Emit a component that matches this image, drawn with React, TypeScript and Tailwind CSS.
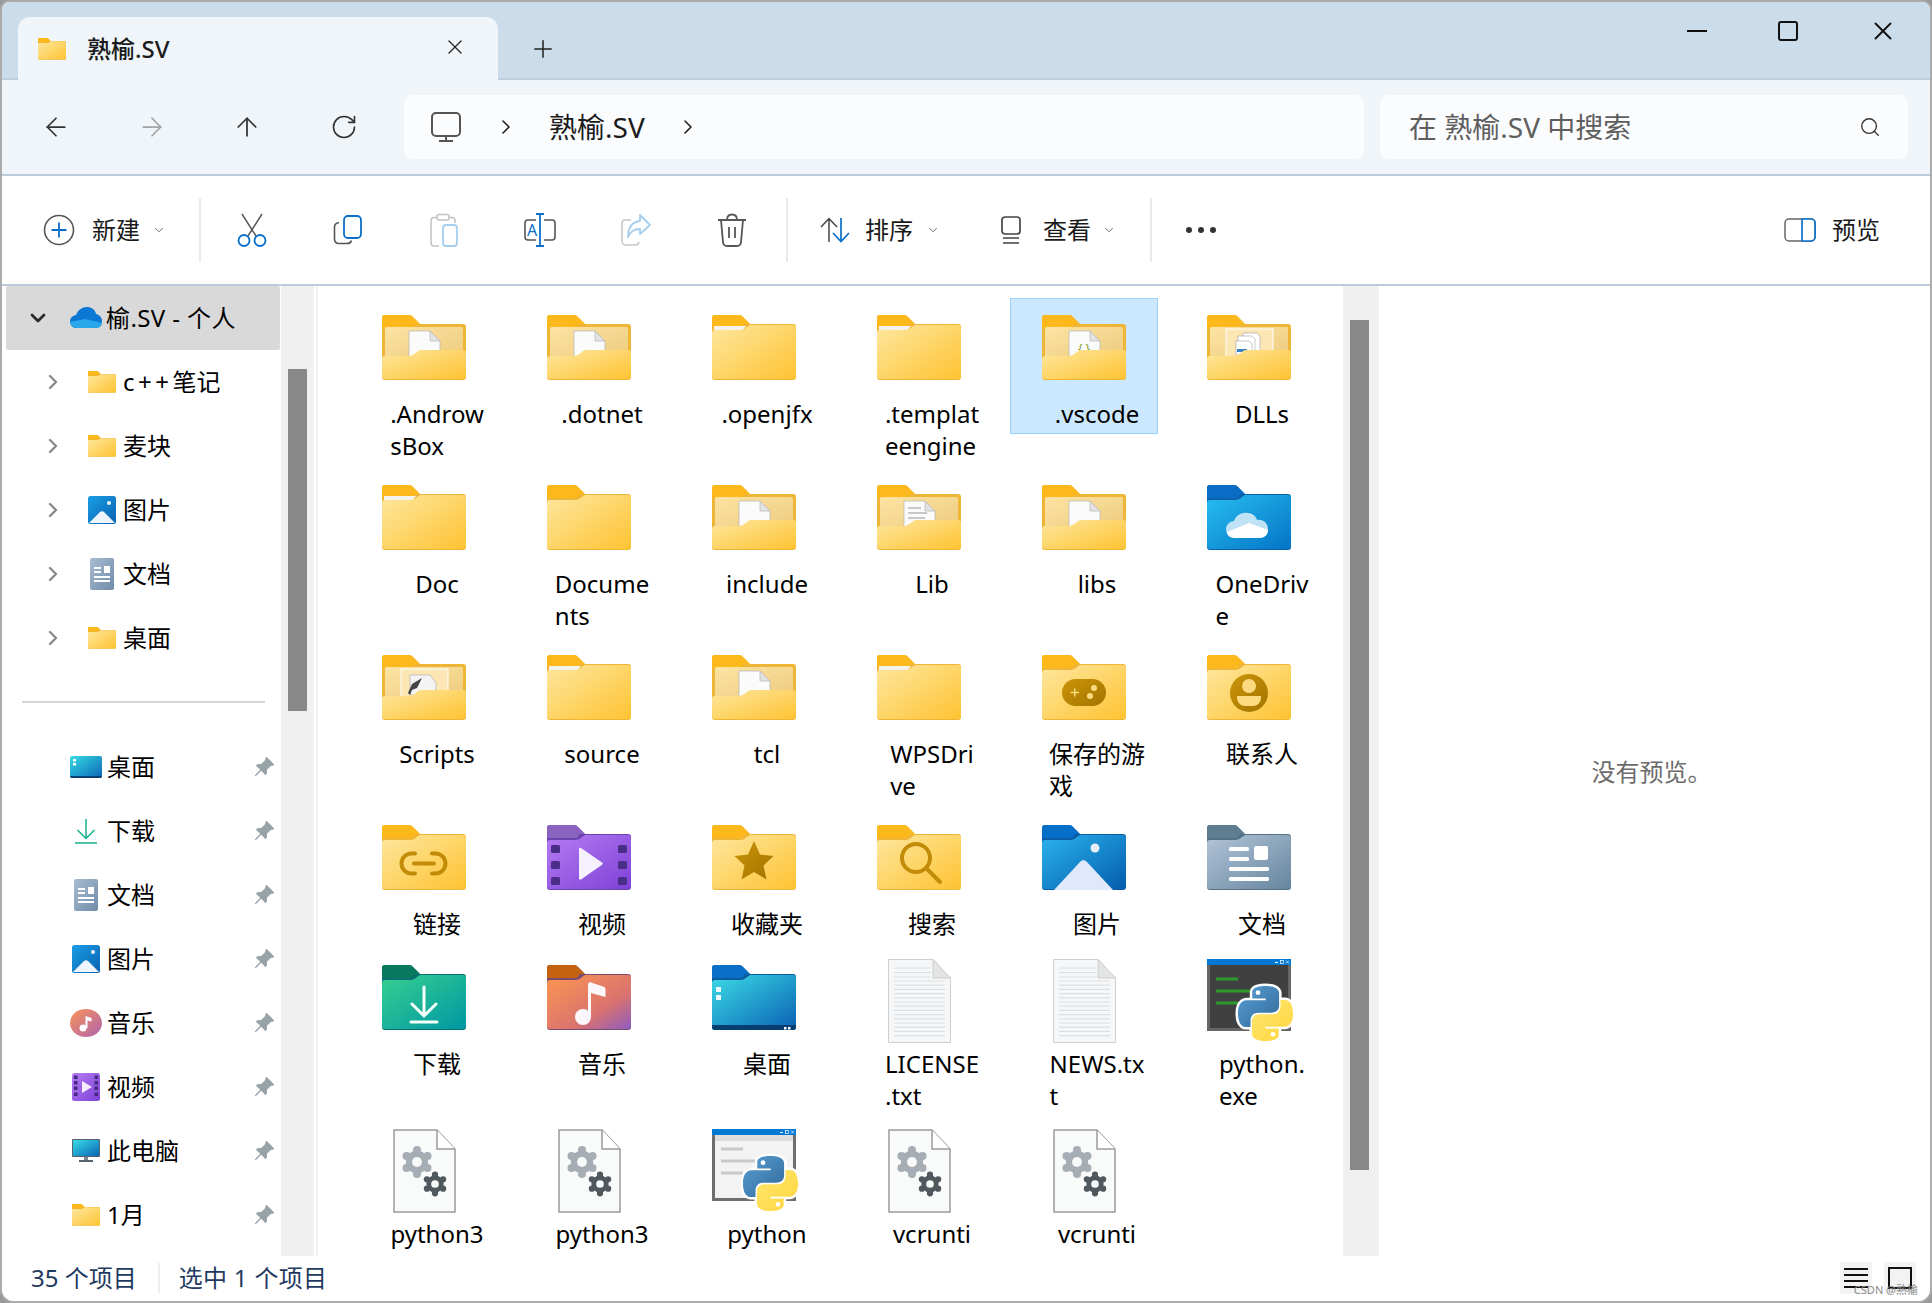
import { ArrowLeft, ArrowRight, ArrowUp, ChevronDown, ChevronRight, Plus, RotateCw, Search, X } from "lucide-react";
import { BsPinAngleFill } from "react-icons/bs";
import type { ReactNode } from "react";

type Theme = { tab: string; back: string; front: string };

const yellow: Theme = { tab: "#fdb91b", back: "#efb536", front: "url(#gYellow)" };
const themes: Record<string, Theme> = {
  yellow,
  onedrive: { tab: "#0a6cc4", back: "#0b62a8", front: "url(#gOne)" },
  green: { tab: "#07795c", back: "#0b6f72", front: "url(#gGreen)" },
  music: { tab: "#c5620f", back: "#7a4a70", front: "url(#gMusic)" },
  desktop: { tab: "#0a6fc8", back: "#0a5a9e", front: "url(#gDesk)" },
  pics: { tab: "#0670c8", back: "#0a5ca6", front: "url(#gPics)" },
  docs: { tab: "#5f7d90", back: "#567086", front: "url(#gDocs)" },
  video: { tab: "#8a62c0", back: "#6a43b0", front: "url(#gVideo)" },
};

const CLOSED_FRONT = "M0 18a3 3 0 0 1 3-3H28c3 0 5-1 7-3l3-2H81a3 3 0 0 1 3 3V61a3 3 0 0 1-3 3H3a3 3 0 0 1-3-3Z";
const OPEN_FRONT = "M0 44a3 3 0 0 1 3-3H26c3 0 5-1 7-2.500l2-1.500c1-1 2-2 4-2H81a3 3 0 0 1 3 3V61a3 3 0 0 1-3 3H3a3 3 0 0 1-3-3Z";

const Gradients = () => (
  <svg className="absolute w-0 h-0">
    <defs>
      {[
        ["gYellow", "#fee79f", "#fec332"],
        ["gOne", "#27bdf0", "#0474c6"],
        ["gGreen", "#36d08f", "#0097a3"],
        ["gDesk", "#3bdae6", "#0a62b4"],
        ["gPics", "#2bb3ec", "#035cad"],
        ["gDocs", "#b2c4d8", "#66869f"],
        ["gVideo", "#b57bf3", "#7d42d6"],
        ["gInner", "#fde4a3", "#eccb7e"],
        ["gTile", "#1b9ee6", "#0a62b0"],
        ["gSlate", "#a9bcd2", "#6f8ca8"],
        ["gMonitor", "#37dbe6", "#0b66b6"],
      ].map(([id, a, b]) => (
        <linearGradient key={id} id={id} x1="0" y1="0" x2="1" y2="1">
          <stop offset="0" stopColor={a} />
          <stop offset="1" stopColor={b} />
        </linearGradient>
      ))}
      <linearGradient id="gMusic" x1="0" y1="0" x2="1" y2="1">
        <stop offset="0" stopColor="#fd9650" />
        <stop offset="0.65" stopColor="#d9736f" />
        <stop offset="1" stopColor="#8e5cc0" />
      </linearGradient>
      <linearGradient id="gDark" x1="0" y1="0" x2="1" y2="1">
        <stop offset="0" stopColor="#cc9408" />
        <stop offset="1" stopColor="#a27500" />
      </linearGradient>
      <linearGradient id="gPyBlue" x1="0" y1="0" x2="1" y2="1">
        <stop offset="0" stopColor="#5a9fd4" />
        <stop offset="1" stopColor="#306998" />
      </linearGradient>
      <linearGradient id="gPyYellow" x1="0" y1="0" x2="1" y2="1">
        <stop offset="0" stopColor="#ffd43b" />
        <stop offset="1" stopColor="#ffe873" />
      </linearGradient>
    </defs>
  </svg>
);

const Paper = ({ kind }: { kind: string }) => {
  if (kind === "dll" || kind === "script") {
    return (
      <g>
        <rect x="19" y="14" width="47" height="30" fill="#fbe6b4" stroke="#fff" />
        {kind === "dll" ? (
          <g fill="#fff" stroke="#9aa3aa" strokeWidth="0.6">
            <path d="M36 30V18h14l3 3v16H36Z" />
            <path d="M31 33V21h14l3 3v16H31Z" />
            <path d="M29 40V26h13l3 3v11Z" />
            <rect x="30" y="34" width="10" height="3" fill="#3b82c4" stroke="none" />
          </g>
        ) : (
          <g>
            <path d="M28 20H48l6 8v12H28Z" fill="#f4f4f4" stroke="#aaa" strokeWidth="0.6" />
            <path d="M26 38l4-9 10-6-5 10-5 2-2 5Z" fill="#444" />
            <circle cx="51" cy="40" r="5" fill="#2f78b8" />
          </g>
        )}
      </g>
    );
  }
  return (
    <g>
      <path d="M27 42V16H48L58 26V42Z" fill="#fbfbfb" stroke="#b5b5b5" strokeWidth="0.7" />
      <path d="M48 16V26H58Z" fill="#e3e3e3" stroke="#b5b5b5" strokeWidth="0.7" />
      {kind === "code" && (
        <text x="42" y="38" textAnchor="middle" fontSize="12" fill="#8aa030">{"{ }"}</text>
      )}
      {kind === "lib" && (
        <g>
          <path d="M31 23H44M31 28H50M31 33H48" stroke="#b8b8b8" strokeWidth="1.400" />
          <rect x="44" y="35" width="14" height="8" rx="3" fill="#2f78b8" />
        </g>
      )}
    </g>
  );
};

const overlays: Record<string, ReactNode> = {
  link: (
    <g fill="none" stroke="#c28c08" strokeWidth="4" strokeLinecap="round">
      <path d="M33 28.500H29.500a10 10 0 0 0 0 20H33" />
      <path d="M50 28.500H53.500a10 10 0 0 1 0 20H50" />
      <path d="M32 38.500H52" />
    </g>
  ),
  video: (
    <g>
      {[20, 36, 52].map((y) => (
        <g key={y} fill="#4a2d86">
          <rect x="4" y={y} width="9" height="8" rx="1.500" />
          <rect x="71" y={y} width="9" height="8" rx="1.500" />
        </g>
      ))}
      <path d="M32 24.500C32 23 33 22.500 34 23L55 37.500c1 .7 1 1.500 0 2.200L34 54.500c-1 .6-2 0-2-1.500Z" fill="#f6f0ff" />
    </g>
  ),
  star: <path d="M42 16l6 13.500 13.500 1.500-10 9.500 3 14L42 47l-12.500 7.500 3-14-10-9.500 13.500-1.500Z" fill="url(#gDark)" />,
  game: (
    <g>
      <rect x="20" y="24" width="44" height="27" rx="13.500" fill="url(#gDark)" />
      <path d="M28.500 37.500H37M32.700 33.500V41.500" stroke="#fbd97e" strokeWidth="1.500" />
      <circle cx="52" cy="33" r="3" fill="#fbd97e" />
      <circle cx="48" cy="41" r="3" fill="#fbd97e" />
    </g>
  ),
  contact: (
    <g>
      <circle cx="42" cy="38" r="19" fill="url(#gDark)" />
      <circle cx="42" cy="31" r="7" fill="#fdd97f" />
      <path d="M30 41H54V43a8 8 0 0 1-8 8H38a8 8 0 0 1-8-8Z" fill="#fdd97f" />
    </g>
  ),
  search: (
    <g fill="none" stroke="#c28c08" strokeWidth="4" strokeLinecap="round">
      <circle cx="39" cy="33" r="14" />
      <path d="M50 44L63 57" />
    </g>
  ),
  pics: (
    <g>
      <circle cx="53" cy="23" r="4.500" fill="#e5eef8" />
      <path d="M12 65L38 37c2-2.500 5-2.500 7 0L71 65Z" fill="#dfe9fb" />
    </g>
  ),
  docs: (
    <g fill="#fff">
      <rect x="22" y="22" width="20" height="4" rx="1.500" />
      <rect x="22" y="32" width="20" height="4" rx="1.500" />
      <rect x="47" y="21" width="14" height="14" rx="2" />
      <rect x="22" y="42" width="40" height="4" rx="1.500" />
      <rect x="22" y="52" width="40" height="4" rx="1.500" />
    </g>
  ),
  download: (
    <g fill="none" stroke="#f4fffb" strokeWidth="3" strokeLinecap="round" strokeLinejoin="round">
      <path d="M42 22V50M30 39L42 51L54 39" />
      <path d="M29 57H55" />
    </g>
  ),
  music: (
    <g fill="#fbf7fa">
      <circle cx="36" cy="52" r="8" />
      <path d="M41 52V20c0-2 1-3 3-2.500l12 4c2 .7 2.500 1.500 2.500 3V32L44 28V52Z" />
    </g>
  ),
  desktop: (
    <g>
      <path d="M0 60H84V62a3 3 0 0 1-3 3H3a3 3 0 0 1-3-3Z" fill="#063e72" />
      <rect x="4" y="22" width="5" height="5" fill="#eaf7fb" />
      <rect x="4" y="30" width="5" height="5" fill="#eaf7fb" />
      <rect x="72" y="62" width="2.500" height="2.500" fill="#fff" />
      <rect x="76" y="62" width="2.500" height="2.500" fill="#fff" />
    </g>
  ),
  onedrive: (
    <g>
      <path d="M28 53a8.500 8.500 0 0 1-1-17c2-6 8-9 14-8 4 0 8 3 9 7 6-1 11 3 11 9s-4 9-9 9Z" fill="#bfe3f4" />
      <path d="M28 53c-5 0-8-3-8-6l22-9 19 7c0 5-4 8-9 8Z" fill="#fff" />
    </g>
  ),
};

const FolderIcon = ({ theme = "yellow", paper, strip, overlay, width = 84 }: { theme?: string; paper?: string; strip?: boolean; overlay?: string; width?: number }) => {
  const t = themes[theme];
  return (
    <svg width={width} height={(width * 66) / 84} viewBox="0 0 84 66">
      <path d="M3 0H27a5 5 0 0 1 4 2L38 9H81a3 3 0 0 1 3 3V62a3 3 0 0 1-3 3H3a3 3 0 0 1-3-3V3a3 3 0 0 1 3-3Z" fill={t.back} />
      <path d="M3 0H27a5 5 0 0 1 4 2L38 9H33L30 13H0V3a3 3 0 0 1 3-3Z" fill={t.tab} />
      {paper ? (
        <g>
          <rect x="3" y="12" width="78" height="32" rx="1.500" fill="url(#gInner)" />
          <Paper kind={paper} />
          <path d={OPEN_FRONT} fill={t.front} />
        </g>
      ) : (
        <g>
          {strip && <path d="M2 11H34L31 15H2Z" fill="#f4f2ea" />}
          <path d={CLOSED_FRONT} fill={t.front} />
        </g>
      )}
      {overlay && overlays[overlay]}
    </svg>
  );
};

const TxtIcon = () => (
  <svg width="63" height="84" viewBox="0 0 63 84" className="mt-[6px]">
    <path d="M.5.500H45L62.500 19V83.500H.5Z" fill="#f6f7f8" stroke="#cfcfcf" />
    {Array.from({ length: 14 }, (_, i) => (
      <path key={i} d={`M6 ${22 + i * 4.2}H57`} stroke="#dcdfe2" strokeWidth="1.200" />
    ))}
    {[9, 13.5, 18].map((y) => (
      <path key={y} d={`M6 ${y}H43`} stroke="#dcdfe2" strokeWidth="1.200" />
    ))}
    <path d="M45 .5V19H62.500Z" fill="#e2e4e6" stroke="#cfcfcf" />
  </svg>
);

const Gear = ({ x, y, r, color }: { x: number; y: number; r: number; color: string }) => (
  <g fill={color}>
    <circle cx={x} cy={y} r={r * 0.72} />
    {[0, 60, 120, 180, 240, 300].map((a) => (
      <circle key={a} cx={x + r * 0.78 * Math.sin((a * Math.PI) / 180)} cy={y - r * 0.78 * Math.cos((a * Math.PI) / 180)} r={r * 0.26} />
    ))}
    <circle cx={x} cy={y} r={r * 0.32} fill="#f8f9f9" />
  </g>
);

const GearFile = () => (
  <svg width="63" height="84" viewBox="0 0 63 84" className="mt-[6px]">
    <path d="M1 1H44L62 20V83H1Z" fill="#f9fafa" stroke="#9a9a9a" strokeWidth="1.500" />
    <path d="M44 1V20H62" fill="#fff" stroke="#9a9a9a" strokeWidth="1.500" />
    <Gear x={24} y={33} r={15.5} color="#a6adb4" />
    <Gear x={42} y={55} r={12} color="#50585e" />
  </svg>
);

const PyLogo = ({ x, y, size }: { x: number; y: number; size: number }) => {
  const d = "M54.900 0C26.900 0 28.600 12.200 28.600 12.200V24.800H55.300V28.600H18C18 28.600 0 26.600 0 54.900S15.700 82.200 15.700 82.200H25.100V69.100S24.600 53.400 40.600 53.400H67.200S82.200 53.200 82.200 38.900V15.200S84.500 0 54.900 0ZM40 8.500A4.800 4.800 0 1 1 40 18.100 4.800 4.800 0 0 1 40 8.500Z";
  return (
    <svg x={x} y={y} width={size} height={size} viewBox="-6 -6 122 122">
      <path d={d} fill="#fff" stroke="#fff" strokeWidth="10" strokeLinejoin="round" />
      <path d={d} transform="rotate(180 55 55)" fill="#fff" stroke="#fff" strokeWidth="10" strokeLinejoin="round" />
      <path d={d} fill="url(#gPyBlue)" fillRule="evenodd" />
      <path d={d} transform="rotate(180 55 55)" fill="url(#gPyYellow)" fillRule="evenodd" />
    </svg>
  );
};

const PyWindow = ({ dark }: { dark?: boolean }) => (
  <svg width="84" height="84" viewBox="0 0 84 84" className="overflow-visible mt-[6px]">
    <rect y="0" width="84" height="72" fill={dark ? "#666" : "#6e6e6e"} />
    <rect x="3" y="6" width="78" height="63" fill={dark ? "#404040" : "#f3f3f3"} />
    {!dark && <rect x="3" y="6" width="78" height="6" fill="#dcdcdc" />}
    <rect width="84" height="6" fill="#0078d4" />
    <rect x="68" y="3" width="3" height="1" fill="#fff" />
    <rect x="73.500" y="1.500" width="3" height="3" fill="none" stroke="#fff" strokeWidth="0.700" />
    <path d="M79 1.500L82 4.500M82 1.500L79 4.500" stroke="#fff" strokeWidth="0.700" />
    {[20, 32, 44].map((y, i) => (
      <rect key={y} x={9} y={y - 1.5} width={i === 1 ? 34 : 22} height="3" fill={dark ? "#2e9a2e" : "#c9c9c9"} />
    ))}
    <PyLogo x={28} y={24} size={61} />
  </svg>
);

const Tile = () => (
  <svg width="28" height="28" viewBox="0 0 28 28">
    <rect width="28" height="28" rx="2.500" fill="url(#gTile)" />
    <circle cx="21" cy="7" r="2" fill="#eaf4fb" />
    <path d="M1 27L12 16c1-1 3-1 4 0L27 27Z" fill="#eef5fd" />
  </svg>
);

const DocTile = () => (
  <svg width="24" height="32" viewBox="0 0 24 32">
    <rect width="24" height="32" rx="2" fill="url(#gSlate)" />
    <path d="M4 10H11M4 14H11M4 19H20M4 23H20" stroke="#fff" strokeWidth="1.800" />
    <rect x="14" y="8" width="6" height="7" fill="#fff" />
  </svg>
);

const navIcons: Record<string, ReactNode> = {
  desktop: (
    <svg width="32" height="22" viewBox="0 0 32 22">
      <rect width="32" height="22" rx="2" fill="url(#gMonitor)" />
      <path d="M0 20H32V20a2 2 0 0 1-2 2H2a2 2 0 0 1-2-2Z" fill="#064070" />
      <rect x="3" y="3" width="3" height="2.500" fill="#fff" />
      <rect x="3" y="7" width="3" height="2.500" fill="#fff" />
    </svg>
  ),
  download: (
    <svg width="24" height="26" viewBox="0 0 24 26" fill="none" stroke="#17b08f" strokeWidth="1.500">
      <path d="M12 1V20M3.500 12L12 20.500L20.500 12M1 25H23" />
    </svg>
  ),
  doc: <DocTile />,
  pic: <Tile />,
  music: (
    <svg width="32" height="28" viewBox="0 0 32 28">
      <defs>
        <linearGradient id="gNavMusic" x1="0" y1="0" x2="1" y2="1">
          <stop offset="0" stopColor="#f99255" />
          <stop offset="1" stopColor="#b064b0" />
        </linearGradient>
      </defs>
      <ellipse cx="16" cy="14" rx="16" ry="14" fill="url(#gNavMusic)" />
      <circle cx="13" cy="19" r="3.500" fill="#fff" />
      <path d="M15.500 19V7l6 2v3.500l-4-1V19Z" fill="#fff" />
    </svg>
  ),
  video: (
    <svg width="28" height="28" viewBox="0 0 28 28">
      <rect width="28" height="28" rx="2.500" fill="url(#gVideo)" />
      {[2.5, 8, 13.5, 19.5].map((y) => (
        <g key={y} fill="#432a80">
          <rect x="2" y={y} width="3.500" height="3.500" />
          <rect x="22.500" y={y} width="3.500" height="3.500" />
        </g>
      ))}
      <path d="M10 8L20 14L10 20Z" fill="#f4eeff" />
    </svg>
  ),
  pc: (
    <svg width="28" height="24" viewBox="0 0 28 24">
      <rect width="28" height="18" rx="1" fill="#58626b" />
      <rect x="1" y="1" width="26" height="16" fill="url(#gMonitor)" />
      <rect x="12" y="18" width="4" height="3" fill="#7b868f" />
      <rect x="7" y="21" width="14" height="2" fill="#58626b" />
    </svg>
  ),
  folder: <FolderIcon width={28} />,
};

const upperNav: { name: ReactNode; icon: string }[] = [
  { name: <><span className="tracking-[3.5px]">c++</span>笔记</>, icon: "folder" },
  { name: "麦块", icon: "folder" },
  { name: "图片", icon: "pic" },
  { name: "文档", icon: "doc" },
  { name: "桌面", icon: "folder" },
];

const lowerNav = [
  { name: "桌面", icon: "desktop" },
  { name: "下载", icon: "download" },
  { name: "文档", icon: "doc" },
  { name: "图片", icon: "pic" },
  { name: "音乐", icon: "music" },
  { name: "视频", icon: "video" },
  { name: "此电脑", icon: "pc" },
  { name: "1月", icon: "folder" },
];

const Sidebar = () => (
  <div className="w-[279px] shrink-0 overflow-hidden">
    <div className="flex items-center h-[64px] ml-[4px] w-[274px] bg-[#d9d9d9] rounded-[2px]">
      <ChevronDown size={24} strokeWidth={2.8} color="#2b2b2b" className="ml-[20px]" />
      <svg width="32" height="22" viewBox="0 0 32 22" className="ml-[20px]">
        <path d="M7 21a6.500 6.500 0 0 1-1-13C8 3 12 0 17 0c4 0 8 2 9 7 3 .5 6 3 6 7 0 4-3 7-6 7Z" fill="#0a78d4" />
        <path d="M7 21c-4 0-7-3-7-6l15-3 17 4c0 3-3 5-6 5Z" fill="#28a8ea" />
      </svg>
      <span className="ml-[4px] text-[24px] tracking-[0.4px]">榆.SV - 个人</span>
    </div>
    {upperNav.map((n, i) => (
      <div key={i} className="flex items-center h-[64px]">
        <ChevronRight size={24} strokeWidth={2.4} color="#8a8a8a" className="ml-[39px] shrink-0" />
        <div className="w-[28px] ml-[23px] flex justify-center shrink-0">{navIcons[n.icon]}</div>
        <span className="ml-[7px] text-[24px]">{n.name}</span>
      </div>
    ))}
    <div className="h-[2px] bg-[#d4d4d4] ml-[20px] w-[243px] mt-[31px] mb-[32px]" />
    {lowerNav.map((n) => (
      <div key={n.name} className="flex items-center h-[64px]">
        <div className="w-[32px] ml-[68px] flex justify-center shrink-0">{navIcons[n.icon]}</div>
        <span className="ml-[5px] text-[24px]">{n.name}</span>
        <BsPinAngleFill size={22} color="#98a2a9" className="ml-auto mr-[6px]" />
      </div>
    ))}
  </div>
);

type Item = { lines: string[]; icon: ReactNode; selected?: boolean };

const folder = (lines: string[], paper?: string, selected?: boolean): Item => ({ lines, icon: <FolderIcon paper={paper} />, selected });
const strip = (lines: string[]): Item => ({ lines, icon: <FolderIcon strip /> });
const special = (lines: string[], theme: string, overlay: string): Item => ({ lines, icon: <FolderIcon theme={theme} overlay={overlay} /> });

const items: Item[] = [
  folder([".Androw", "sBox"], "plain"),
  folder([".dotnet"], "plain"),
  strip([".openjfx"]),
  strip([".templat", "eengine"]),
  folder([".vscode"], "code", true),
  folder(["DLLs"], "dll"),
  strip(["Doc"]),
  folder(["Docume", "nts"]),
  folder(["include"], "plain"),
  folder(["Lib"], "lib"),
  folder(["libs"], "plain"),
  special(["OneDriv", "e"], "onedrive", "onedrive"),
  folder(["Scripts"], "script"),
  strip(["source"]),
  folder(["tcl"], "plain"),
  strip(["WPSDri", "ve"]),
  special(["保存的游", "戏"], "yellow", "game"),
  special(["联系人"], "yellow", "contact"),
  special(["链接"], "yellow", "link"),
  special(["视频"], "video", "video"),
  special(["收藏夹"], "yellow", "star"),
  special(["搜索"], "yellow", "search"),
  special(["图片"], "pics", "pics"),
  special(["文档"], "docs", "docs"),
  special(["下载"], "green", "download"),
  special(["音乐"], "music", "music"),
  special(["桌面"], "desktop", "desktop"),
  { lines: ["LICENSE", ".txt"], icon: <TxtIcon /> },
  { lines: ["NEWS.tx", "t"], icon: <TxtIcon /> },
  { lines: ["python.", "exe"], icon: <PyWindow dark /> },
  { lines: ["python3", ".dll"], icon: <GearFile /> },
  { lines: ["python3", "12.dll"], icon: <GearFile /> },
  { lines: ["python"], icon: <PyWindow /> },
  { lines: ["vcrunti", "me140"], icon: <GearFile /> },
  { lines: ["vcrunti", "me140"], icon: <GearFile /> },
];

const Cell = ({ item }: { item: Item }) => (
  <div className={`pt-[8px] pb-[4px] ${item.selected ? "bg-[#cce8ff] outline outline-1 -outline-offset-1 outline-[#99d1ff]" : "min-h-[138px]"}`}>
    <div className="h-[84px] flex items-center justify-center">{item.icon}</div>
    <div className="mt-[8px] pl-[26px] text-[24px] leading-[32px] text-black">
      <div className="w-fit mx-auto whitespace-nowrap">
        {item.lines.map((l) => (
          <div key={l}>{l}</div>
        ))}
      </div>
    </div>
  </div>
);

const ToolIcon = ({ children }: { children: ReactNode }) => (
  <div className="w-[96px] h-[40px] flex items-center justify-center shrink-0">{children}</div>
);

const Divider = () => <div className="w-[2px] h-[64px] bg-[#e9e9e9] shrink-0" />;

const Toolbar = () => (
  <div className="h-[108px] shrink-0 bg-white flex items-center text-[24px] text-[#1a1a1a]">
    <svg width="32" height="32" viewBox="0 0 32 32" fill="none" className="ml-[41px]">
      <circle cx="16" cy="16" r="14.500" stroke="#555" strokeWidth="1.600" />
      <path d="M16 8.500V23.500M8.500 16H23.500" stroke="#0a6fc9" strokeWidth="1.800" />
    </svg>
    <span className="ml-[17px] w-[48px]">新建</span>
    <ChevronDown size={14} strokeWidth={1.5} color="#555" className="ml-[12px]" />
    <div className="ml-[33px]"><Divider /></div>
    <div className="ml-[3px] flex">
      <ToolIcon>
        <svg width="30" height="34" viewBox="0 0 30 34" fill="none">
          <path d="M5 1L19 23M25 1L11 23" stroke="#555" strokeWidth="1.400" />
          <circle cx="7" cy="27.500" r="5.500" stroke="#0a6fc9" strokeWidth="1.800" />
          <circle cx="23" cy="27.500" r="5.500" stroke="#0a6fc9" strokeWidth="1.800" />
        </svg>
      </ToolIcon>
      <ToolIcon>
        <svg width="30" height="30" viewBox="0 0 30 30" fill="none">
          <path d="M6 7.500C3 8 1.500 10 1.500 12V24c0 3 2 4.500 4.500 4.500H14c2 0 4-1 4.500-3" stroke="#555" strokeWidth="1.600" />
          <rect x="11" y="1" width="17" height="22" rx="4" fill="#fff" stroke="#0a6fc9" strokeWidth="1.800" />
        </svg>
      </ToolIcon>
      <ToolIcon>
        <svg width="30" height="34" viewBox="0 0 30 34" fill="none">
          <path d="M8 4.500H5a3 3 0 0 0-3 3V30a3 3 0 0 0 3 3H10M20 4.500H23a3 3 0 0 1 3 3V10" stroke="#c4c4c4" strokeWidth="1.600" />
          <rect x="8" y="1.500" width="12" height="5.500" rx="2" stroke="#c4c4c4" strokeWidth="1.600" />
          <rect x="14" y="12" width="14" height="21" rx="3" stroke="#a6cfee" strokeWidth="1.800" />
        </svg>
      </ToolIcon>
      <ToolIcon>
        <svg width="32" height="34" viewBox="0 0 32 34" fill="none">
          <path d="M12 7H4a3 3 0 0 0-3 3V24a3 3 0 0 0 3 3H12M20 7H28a3 3 0 0 1 3 3V24a3 3 0 0 1-3 3H20" stroke="#555" strokeWidth="1.600" />
          <path d="M16 1V33M12 1H20M12 33H20" stroke="#0a6fc9" strokeWidth="1.800" />
          <text x="8" y="23" textAnchor="middle" fontSize="16" fill="#0a6fc9">A</text>
        </svg>
      </ToolIcon>
      <ToolIcon>
        <svg width="30" height="32" viewBox="0 0 30 32" fill="none">
          <path d="M10 6H4a3 3 0 0 0-3 3V27a4 4 0 0 0 4 4H15a4 4 0 0 0 3-3" stroke="#c8c8c8" strokeWidth="1.600" />
          <path d="M19 1L29 11L19 20V15C13 15 10 17 7 23 7 14 11 8 19 7Z" fill="#fff" stroke="#a6cfee" strokeWidth="1.800" strokeLinejoin="round" />
        </svg>
      </ToolIcon>
      <ToolIcon>
        <svg width="30" height="34" viewBox="0 0 30 34" fill="none" stroke="#555" strokeWidth="1.800">
          <path d="M1 7H29M10 7C10 3 12 1.500 15 1.500S20 3 20 7M4 7L6 29a4 4 0 0 0 4 4H20a4 4 0 0 0 4-4L26 7M12 14V25M18 14V25" />
        </svg>
      </ToolIcon>
    </div>
    <div className="ml-[6px]"><Divider /></div>
    <svg width="32" height="26" viewBox="0 0 32 26" fill="none" className="ml-[31px]">
      <path d="M10 25V2M2 10L10 1.500L18 10" stroke="#444" strokeWidth="1.500" />
      <path d="M22 1V24M14 16L22 24.500L30 16" stroke="#0a6fc9" strokeWidth="1.700" />
    </svg>
    <span className="ml-[14px] w-[48px]">排序</span>
    <ChevronDown size={14} strokeWidth={1.5} color="#555" className="ml-[13px]" />
    <svg width="22" height="28" viewBox="0 0 22 28" fill="none" stroke="#444" strokeWidth="1.700" className="ml-[60px]">
      <rect x="2" y="1" width="18" height="17" rx="3" />
      <path d="M3 22H19M3 27H19" />
    </svg>
    <span className="ml-[21px] w-[48px]">查看</span>
    <ChevronDown size={14} strokeWidth={1.5} color="#555" className="ml-[11px]" />
    <div className="ml-[34px]"><Divider /></div>
    <div className="ml-[34px] flex gap-[6px]">
      <div className="w-[6px] h-[6px] rounded-full bg-[#333]" />
      <div className="w-[6px] h-[6px] rounded-full bg-[#333]" />
      <div className="w-[6px] h-[6px] rounded-full bg-[#333]" />
    </div>
    <svg width="32" height="24" viewBox="0 0 32 24" fill="none" className="ml-auto">
      <rect x="1" y="1" width="30" height="22" rx="4" stroke="#666" strokeWidth="1.500" />
      <path d="M18 1H27a4 4 0 0 1 4 4V19a4 4 0 0 1-4 4H18Z" fill="#fff" stroke="#0a6fc9" strokeWidth="1.700" />
    </svg>
    <span className="ml-[16px] mr-[50px]">预览</span>
  </div>
);

export default function App() {
  return (
    <div className="w-[1932px] h-[1303px] bg-[#9a9a9a]">
      <div className="w-full h-full border-2 border-[#ababab] rounded-t-[10px] rounded-b-[14px] overflow-hidden flex flex-col bg-white text-black font-['Noto_Sans','Noto_Sans_CJK_SC',sans-serif]">
        <Gradients />
        {/* title bar */}
        <div className="h-[78px] shrink-0 bg-[#cbdcea] border-b-2 border-[#bdcfdf] flex items-end">
          <div className="ml-[16px] w-[480px] h-[63px] -mb-[2px] bg-[#f0f5f9] rounded-t-[12px] flex items-center">
            <div className="ml-[20px]"><FolderIcon width={28} /></div>
            <span className="ml-[21px] text-[24px] font-medium text-[#1a1a1a]">熟榆.SV</span>
            <X size={24} strokeWidth={1.3} color="#222" className="ml-auto mr-[31px] -mt-[4px]" />
          </div>
          <Plus size={28} strokeWidth={1.3} color="#222" className="ml-[31px] mb-[15px]" />
          <div className="ml-auto self-start mt-[14px] flex items-center">
            <div className="w-[20px] h-[2px] bg-[#111] mr-[71px]" />
            <div className="w-[20px] h-[20px] border-2 border-[#111] rounded-[3px] mr-[70px]" />
            <X size={30} strokeWidth={1.5} color="#111" className="mr-[32px]" />
          </div>
        </div>
        {/* address row */}
        <div className="h-[96px] shrink-0 bg-[#f0f5f9] border-b-2 border-[#bccbd9] flex items-center pb-[1px]">
          <div className="flex w-[400px] shrink-0 -ml-[2px]">
            <ArrowLeft size={30} strokeWidth={1.4} color="#333" className="ml-[41px]" />
            <ArrowRight size={30} strokeWidth={1.4} color="#a3a3a3" className="ml-[66px]" />
            <ArrowUp size={30} strokeWidth={1.4} color="#333" className="ml-[65px]" />
            <RotateCw size={28} strokeWidth={1.4} color="#333" className="ml-[68px] mt-[1px]" />
          </div>
          <div className="ml-[4px] w-[960px] h-[64px] bg-[#fbfcfe] rounded-[8px] flex items-center text-[28px] text-[#1a1a1a]">
            <svg width="32" height="30" viewBox="0 0 32 30" fill="none" stroke="#555" strokeWidth="2" className="ml-[26px]">
              <rect x="2" y="1" width="28" height="23" rx="4" />
              <path d="M16 24V29M9 29H23" />
            </svg>
            <ChevronRight size={24} strokeWidth={1.6} color="#222" className="ml-[32px]" />
            <span className="ml-[31px]">熟榆.SV</span>
            <ChevronRight size={24} strokeWidth={1.6} color="#222" className="ml-[31px]" />
          </div>
          <div className="ml-[16px] w-[528px] h-[64px] bg-[#fbfcfe] rounded-[8px] flex items-center text-[28px] text-[#5e5e5e]">
            <span className="ml-[29px]">在 熟榆.SV 中搜索</span>
            <Search size={22} strokeWidth={1.5} color="#333" className="ml-auto mr-[27px]" />
          </div>
        </div>
        <Toolbar />
        <div className="h-[2px] shrink-0 bg-[#bccbd9]" />
        {/* body */}
        <div className="flex-1 min-h-0 flex">
          <Sidebar />
          <div className="w-[33px] shrink-0 bg-[#f0f0f0] pt-[83px]">
            <div className="w-[19px] h-[342px] mx-auto bg-[#888]" />
          </div>
          <div className="w-[4px] shrink-0 border-r-2 border-[#f2f2f2]" />
          <div className="w-[1025px] shrink-0 overflow-hidden pl-[32px] pt-[12px]">
            <div className="grid grid-cols-[repeat(6,148px)] gap-x-[17px] gap-y-[2px] items-start">
              {items.map((item, i) => (
                <Cell key={i} item={item} />
              ))}
            </div>
          </div>
          <div className="w-[34px] shrink-0 bg-[#f0f0f0] pt-[34px]">
            <div className="w-[19px] h-[850px] ml-[7px] bg-[#888]" />
          </div>
          <div className="flex-1 border-l-2 border-[#f2f2f2] flex justify-center pt-[468px] pr-[6px] text-[24px] text-[#6b6b6b]">
            没有预览。
          </div>
        </div>
        {/* status bar */}
        <div className="h-[45px] shrink-0 bg-white flex items-center text-[24px] text-[#1f3a5f] pb-[2px]">
          <span className="ml-[29px]">35 个项目</span>
          <div className="ml-[21px] w-[2px] h-[30px] bg-[#eeeeee]" />
          <span className="ml-[19px] tracking-[0.3px]">选中 1 个项目</span>
          <div className="ml-auto relative flex gap-[12px] mr-[14px]">
            <div className="w-[32px] h-[32px] bg-[#f3f3f3] rounded-[3px] flex flex-col justify-center gap-[4px] px-[4px]">
              {[0, 1, 2, 3].map((i) => (
                <div key={i} className="h-[2px] bg-[#111]" />
              ))}
            </div>
            <div className="w-[32px] h-[32px] bg-[#f3f3f3] rounded-[3px] flex items-center justify-center">
              <div className="w-[24px] h-[22px] border-2 border-[#111]" />
            </div>
            <span className="absolute right-[-2px] bottom-[-3px] text-[11px] leading-[14px] text-[#8a8a8a]">CSDN @熟榆</span>
          </div>
        </div>
      </div>
    </div>
  );
}
